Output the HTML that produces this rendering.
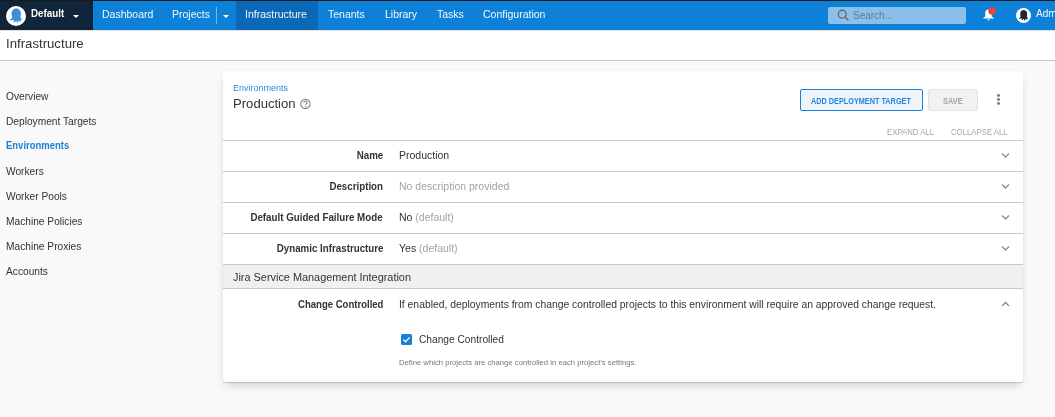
<!DOCTYPE html>
<html><head><meta charset="utf-8">
<style>
*{box-sizing:border-box;margin:0;padding:0}
html{}body{will-change:transform;width:1055px;height:417px;overflow:hidden;background:#f9f9f9;font-family:"Liberation Sans",sans-serif;color:#333}
.a{position:absolute;white-space:nowrap;line-height:1}
#top{position:absolute;left:0;top:0;width:1055px;height:30px;background:#0d80d8;border-top:1px solid #1a1a1a}
#space{position:absolute;left:0;top:1px;width:93px;height:29px;background:#11253a}
#act{position:absolute;left:236px;top:1px;width:82px;height:29px;background:#0a69b6}
.nav{color:#f4f8fc;font-size:10.5px}
#sub{position:absolute;left:0;top:30px;width:1055px;height:31px;background:#fff;border-bottom:1px solid #c4c4c4}
#card{position:absolute;left:223px;top:71px;width:800px;height:311px;background:#fff;border-radius:2px;box-shadow:0 1px 1px rgba(0,0,0,.16),0 5px 10px -3px rgba(0,0,0,.2)}
.side{font-size:10.2px;color:#333;left:6px}
.ln{position:absolute;left:0;width:800px;height:1px;background:#c9c9c9}
.lab{font-weight:bold;font-size:10px;color:#333;transform:scaleX(.975);transform-origin:100% 0}
.val{font-size:10.5px;color:#333}
.dim{color:#a3a3a3}
</style></head><body>
<div id="top"></div>
<div id="space"></div>
<div id="act"></div>
<!-- logo -->
<svg class="a" style="left:6px;top:6px" width="20" height="20" viewBox="0 0 20 20">
  <circle cx="10" cy="10" r="10" fill="#fff"/>
  <path d="M6.1 11.8C5.8 10.5 5.6 9 5.6 7.6C5.6 4.6 7.6 2.5 10.2 2.5C12.8 2.5 14.9 4.6 14.9 7.5C14.9 9 14.7 10.5 14.4 11.8C14.9 12.4 15.6 12.7 16.3 12.8L16.1 13.6C15.4 13.8 14.8 13.7 14.2 13.5C14.4 14.1 14.8 14.8 15.2 15.3L14.4 15.8C13.6 15.4 13.1 14.8 12.7 14.2C12.6 15 12.3 15.8 11.8 16.6L11 16.6C10.7 15.9 10.5 15.1 10.4 14.4C9.9 15.2 9.1 15.8 8.1 16.2L7.2 15.8C7.7 15.1 8 14.4 8.2 13.8C7.2 14.2 6 14.3 4.3 14.3L3.8 13.6C4.9 13.3 5.6 12.7 6.1 11.8Z" fill="#3c8fd9"/>
</svg>
<div class="a nav" style="left:31px;top:9px;font-weight:bold;font-size:10.4px;color:#fff;transform:scaleX(.945);transform-origin:0 0">Default</div>
<svg class="a" style="left:73px;top:15px" width="6" height="3" viewBox="0 0 6 3"><path d="M0 0h6L3 3z" fill="#fff"/></svg>
<div class="a nav" style="left:102px;top:9px">Dashboard</div>
<div class="a nav" style="left:172px;top:9px">Projects</div>
<div class="a" style="left:216px;top:7px;width:1px;height:17px;background:rgba(255,255,255,.45)"></div>
<svg class="a" style="left:223px;top:15px" width="6" height="3" viewBox="0 0 6 3"><path d="M0 0h6L3 3z" fill="#fff"/></svg>
<div class="a nav" style="left:245px;top:9px">Infrastructure</div>
<div class="a nav" style="left:328px;top:9px">Tenants</div>
<div class="a nav" style="left:385px;top:9px">Library</div>
<div class="a nav" style="left:437px;top:9px">Tasks</div>
<div class="a nav" style="left:483px;top:9px">Configuration</div>
<!-- search -->
<div class="a" style="left:828px;top:7px;width:138px;height:17px;background:#8cc0ec;border-radius:2px"></div>
<svg class="a" style="left:837px;top:9px" width="13" height="13" viewBox="0 0 13 13"><circle cx="5.2" cy="5.2" r="3.9" fill="none" stroke="#6a6a6a" stroke-width="1.4"/><path d="M8 8l3.4 3.4" stroke="#6a6a6a" stroke-width="1.5"/></svg>
<div class="a" style="left:853px;top:11px;font-size:10px;color:#5f7a90">Search...</div>
<!-- bell -->
<svg class="a" style="left:981px;top:7px" width="16" height="16" viewBox="0 0 16 16">
  <path d="M7.5 2.2c-2.1.3-3.3 2-3.3 4v3.2L2.2 11.1v.5h10.6v-.5L10.8 9.4V6.2c0-2-1.200-3.700-3.300-4z" fill="#fff"/>
  <path d="M6.4 12.3h2.2c0 .8-.5 1.300-1.100 1.300s-1.100-.5-1.100-1.300z" fill="#fff"/>
  <circle cx="11.1" cy="3.9" r="3.8" fill="#e2473b"/>
</svg>
<!-- avatar -->
<svg class="a" style="left:1016px;top:8px" width="15" height="15" viewBox="0 0 20 20">
  <circle cx="10" cy="10" r="10" fill="#fff"/>
  <path d="M6.1 11.8C5.8 10.5 5.6 9 5.6 7.6C5.6 4.6 7.6 2.5 10.2 2.5C12.8 2.5 14.9 4.6 14.9 7.5C14.9 9 14.7 10.5 14.4 11.8C14.9 12.4 15.6 12.7 16.3 12.8L16.1 13.6C15.4 13.8 14.8 13.7 14.2 13.5C14.4 14.1 14.8 14.8 15.2 15.3L14.4 15.8C13.6 15.4 13.1 14.8 12.7 14.2C12.6 15 12.3 15.8 11.8 16.6L11 16.6C10.7 15.9 10.5 15.1 10.4 14.4C9.9 15.2 9.1 15.8 8.1 16.2L7.2 15.8C7.7 15.1 8 14.4 8.2 13.8C7.2 14.2 6 14.3 4.3 14.3L3.8 13.6C4.9 13.3 5.6 12.7 6.1 11.8Z" fill="#1a2b3b"/>
</svg>
<div class="a nav" style="left:1036px;top:9px;font-size:10px">Admin</div>

<div id="sub"></div>
<div class="a" style="left:0;top:30px;width:1055px;height:1px;background:#e2dfdc"></div>
<div class="a" style="left:6px;top:37px;font-size:13.2px;color:#333">Infrastructure</div>

<div class="a side" style="top:92px">Overview</div>
<div class="a side" style="top:117px">Deployment Targets</div>
<div class="a side" style="top:141px;color:#1a7fd6;font-weight:bold;font-size:10.2px;transform:scaleX(.93);transform-origin:0 0">Environments</div>
<div class="a side" style="top:167px">Workers</div>
<div class="a side" style="top:192px">Worker Pools</div>
<div class="a side" style="top:217px">Machine Policies</div>
<div class="a side" style="top:242px">Machine Proxies</div>
<div class="a side" style="top:267px">Accounts</div>

<div id="card"></div>
<div class="a" style="left:233px;top:84px;font-size:9px;color:#2a8be0">Environments</div>
<div class="a" style="left:233px;top:97px;font-size:13.1px;color:#333">Production</div>
<svg class="a" style="left:300px;top:98px" width="11" height="12" viewBox="0 0 11 12"><circle cx="5.4" cy="5.9" r="4.7" fill="none" stroke="#7a7a7a" stroke-width="1.05"/><path d="M3.9 4.7c0-1 .7-1.7 1.6-1.7s1.6.7 1.6 1.5c0 1.1-1.4 1.2-1.4 2.5" fill="none" stroke="#7a7a7a" stroke-width="1.05"/><circle cx="5.6" cy="8.4" r=".65" fill="#7a7a7a"/></svg>

<!-- buttons -->
<div class="a" style="left:800px;top:89px;width:123px;height:22px;border:1px solid #1a7fd6;border-radius:2px;background:#edf4fc"></div>
<div class="a" style="left:811px;top:97px;font-size:8.6px;font-weight:bold;color:#2286da;transform:scaleX(.848);transform-origin:0 0">ADD DEPLOYMENT TARGET</div>
<div class="a" style="left:928px;top:89px;width:50px;height:22px;border:1px solid #e2e2e2;border-radius:2px;background:#f1f1f1"></div>
<div class="a" style="left:943px;top:97px;font-size:8.6px;font-weight:bold;color:#a3a3a3;transform:scaleX(.86);transform-origin:0 0">SAVE</div>
<div class="a" style="left:997px;top:94px;width:2.8px;height:2.8px;border-radius:50%;background:#7c7c7c"></div>
<div class="a" style="left:997px;top:98px;width:2.8px;height:2.8px;border-radius:50%;background:#7c7c7c"></div>
<div class="a" style="left:997px;top:102px;width:2.8px;height:2.8px;border-radius:50%;background:#7c7c7c"></div>
<div class="a" style="left:887px;top:129px;font-size:8.2px;color:#a6a6a6;transform:scaleX(.95);transform-origin:0 0">EXPAND ALL</div>
<div class="a" style="left:951px;top:129px;font-size:8.2px;color:#a6a6a6;transform:scaleX(.95);transform-origin:0 0">COLLAPSE ALL</div>

<!-- rows -->
<div class="ln" style="left:223px;top:140px"></div>
<div class="ln" style="left:223px;top:171px"></div>
<div class="ln" style="left:223px;top:202px"></div>
<div class="ln" style="left:223px;top:233px"></div>
<div class="ln" style="left:223px;top:264px"></div>
<div class="a" style="left:223px;top:265px;width:800px;height:23px;background:#f0f0f0"></div>
<div class="ln" style="left:223px;top:288px"></div>

<div class="a lab" style="right:672px;top:151px">Name</div>
<div class="a val" style="left:399px;top:150px">Production</div>
<div class="a lab" style="right:672px;top:182px">Description</div>
<div class="a val dim" style="left:399px;top:181px">No description provided</div>
<div class="a lab" style="right:672px;top:213px">Default Guided Failure Mode</div>
<div class="a val" style="left:399px;top:212px">No <span class="dim">(default)</span></div>
<div class="a lab" style="right:672px;top:244px">Dynamic Infrastructure</div>
<div class="a val" style="left:399px;top:243px">Yes <span class="dim">(default)</span></div>
<div class="a" style="left:233px;top:272px;font-size:10.9px;color:#333">Jira Service Management Integration</div>
<div class="a lab" style="right:672px;top:300px;transform:scaleX(.955)">Change Controlled</div>
<div class="a val" style="left:399px;top:300px;font-size:10.35px">If enabled, deployments from change controlled projects to this environment will require an approved change request.</div>

<!-- chevrons -->
<svg class="a" style="left:1001px;top:153px" width="9" height="6" viewBox="0 0 9 6"><path d="M1 .5l3.5 3.5L8 .5" fill="none" stroke="#8c8c8c" stroke-width="1.25"/></svg>
<svg class="a" style="left:1001px;top:184px" width="9" height="6" viewBox="0 0 9 6"><path d="M1 .5l3.5 3.5L8 .5" fill="none" stroke="#8c8c8c" stroke-width="1.25"/></svg>
<svg class="a" style="left:1001px;top:215px" width="9" height="6" viewBox="0 0 9 6"><path d="M1 .5l3.5 3.5L8 .5" fill="none" stroke="#8c8c8c" stroke-width="1.25"/></svg>
<svg class="a" style="left:1001px;top:246px" width="9" height="6" viewBox="0 0 9 6"><path d="M1 .5l3.5 3.5L8 .5" fill="none" stroke="#8c8c8c" stroke-width="1.25"/></svg>
<svg class="a" style="left:1001px;top:301px" width="9" height="6" viewBox="0 0 9 6"><path d="M1 5l3.5-3.5L8 5" fill="none" stroke="#8c8c8c" stroke-width="1.25"/></svg>

<!-- checkbox -->
<svg class="a" style="left:401px;top:334px" width="11" height="11" viewBox="0 0 11 11"><rect x="0" y="0" width="11" height="11" rx="1.5" fill="#1a7fd6"/><path d="M2.3 5.6l2.2 2.2 4.3-4.4" fill="none" stroke="#fff" stroke-width="1.3"/></svg>
<div class="a" style="left:419px;top:335px;font-size:10.2px;color:#333">Change Controlled</div>
<div class="a" style="left:399px;top:359px;font-size:7.7px;color:#777">Define which projects are change controlled in each project’s settings.</div>
</body></html>
